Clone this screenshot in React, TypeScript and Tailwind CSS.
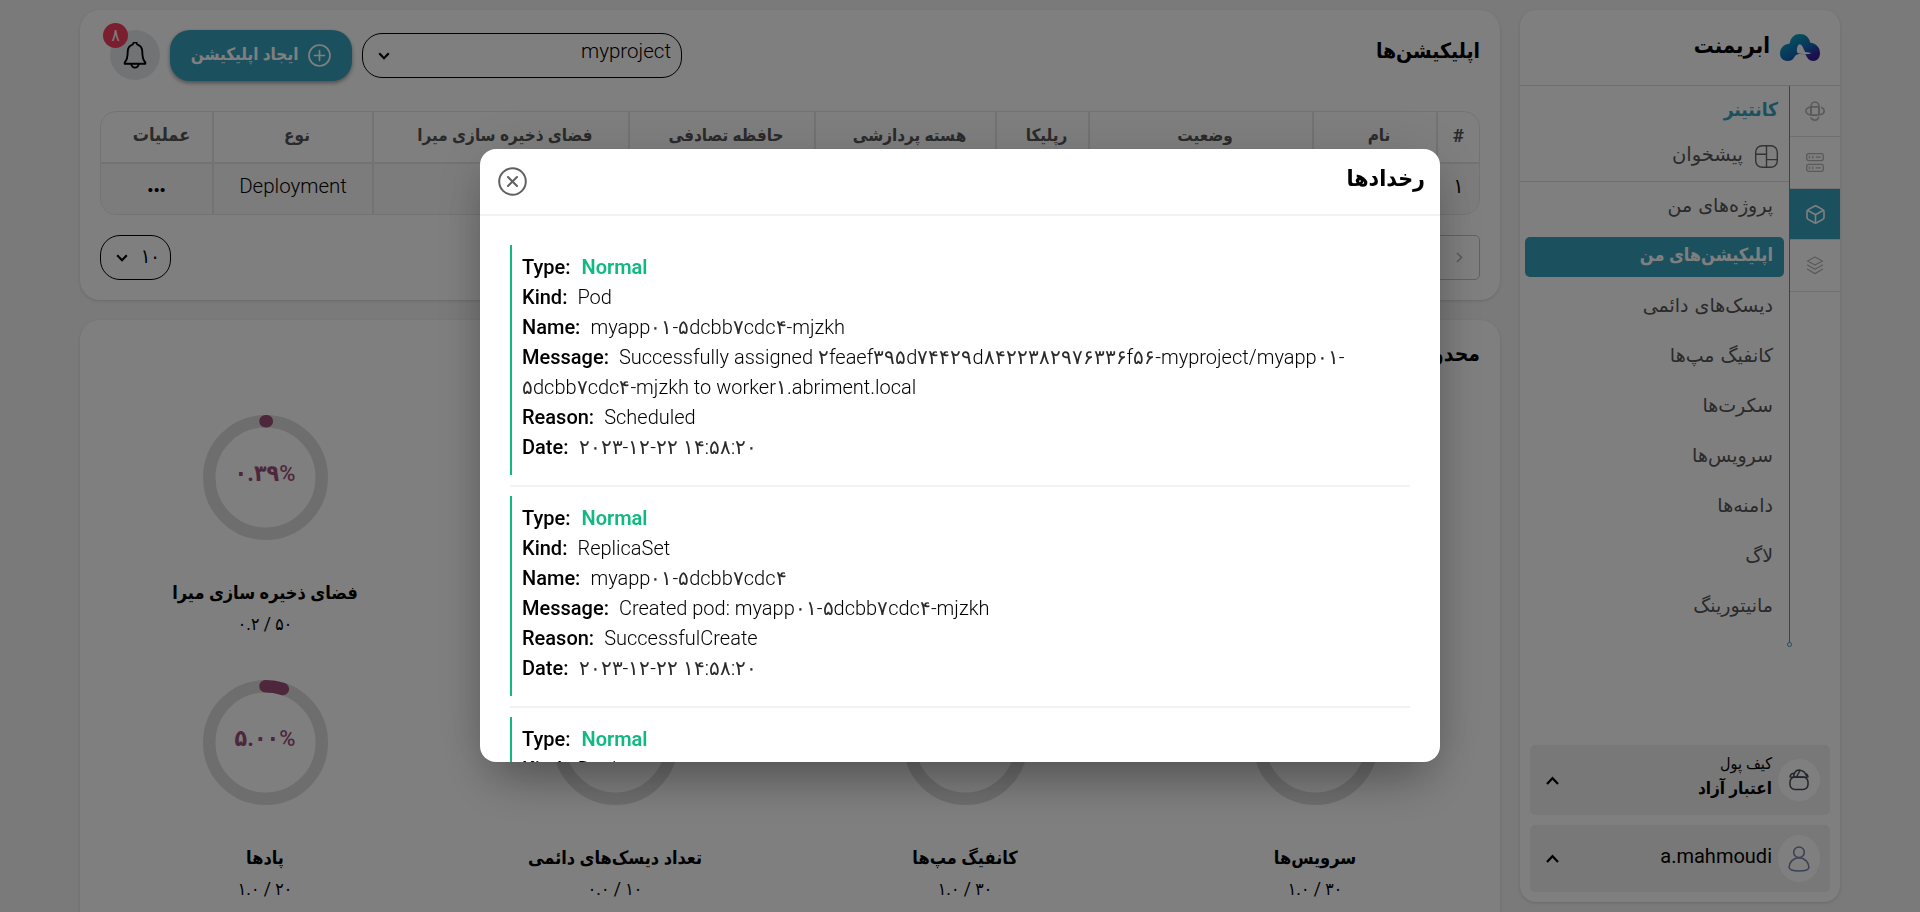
import React from "react";

const NAV = ["پروژه‌های من", "اپلیکیشن‌های من", "دیسک‌های دائمی", "کانفیگ مپ‌ها", "سکرت‌ها", "سرویس‌ها", "دامنه‌ها", "لاگ", "مانیتورینگ"];

const COLUMNS = [
  { title: "#", cell: "۱" },
  { title: "نام", cell: "" },
  { title: "وضعیت", cell: "" },
  { title: "رپلیکا", cell: "" },
  { title: "هسته پردازشی", cell: "" },
  { title: "حافظه تصادفی", cell: "" },
  { title: "فضای ذخیره سازی میرا", cell: "" },
  { title: "نوع", cell: "Deployment" },
  { title: "عملیات", cell: "•••" },
];

const EVENTS = [
  {
    kind: "Pod",
    name: "myapp۰۱-۵dcbb۷cdc۴-mjzkh",
    message: "Successfully assigned ۲feaef۳۹۵d۷۴۴۲۹d۸۴۲۲۳۸۲۹۷۶۳۳۶f۵۶-myproject/myapp۰۱-۵dcbb۷cdc۴-mjzkh to worker۱.abriment.local",
    reason: "Scheduled",
    date: "۲۰۲۳-۱۲-۲۲ ۱۴:۵۸:۲۰",
  },
  {
    kind: "ReplicaSet",
    name: "myapp۰۱-۵dcbb۷cdc۴",
    message: "Created pod: myapp۰۱-۵dcbb۷cdc۴-mjzkh",
    reason: "SuccessfulCreate",
    date: "۲۰۲۳-۱۲-۲۲ ۱۴:۵۸:۲۰",
  },
  { kind: "Deployment", name: "", message: "", reason: "", date: "" },
];

function Mixed({ text }: { text: string }) {
  return (
    <>
      {text.split(/([۰-۹]+)/).map((part, i) =>
        i % 2 ? (
          <span key={i} className="text-[20px] leading-[16px] text-[#2a2a2a] [font-family:'DejaVu_Sans',sans-serif]">{part}</span>
        ) : (
          <React.Fragment key={i}>{part}{part.endsWith("-") && <wbr />}</React.Fragment>
        )
      )}
    </>
  );
}

function Chevron({ up = false }: { up?: boolean }) {
  return up ? (
    <svg width="13" height="9" viewBox="0 0 13 9" fill="none" stroke="#000" strokeWidth="2.2">
      <path d="M1 8 6.500 2.200 12 8" />
    </svg>
  ) : (
    <svg width="12" height="8" viewBox="0 0 12 8" fill="none" stroke="#000" strokeWidth="2.2">
      <path d="M1.200 1.200 6 6.200 10.800 1.200" />
    </svg>
  );
}

function Logo() {
  return (
    <svg width="40" height="28" viewBox="0 0 40 28">
      <defs>
        <linearGradient id="lg" x1="0.2" y1="0" x2="1" y2="1">
          <stop offset="0.1" stopColor="#07a3c0" />
          <stop offset="0.55" stopColor="#1266b5" />
          <stop offset="0.8" stopColor="#3a1f9c" />
          <stop offset="1" stopColor="#3c1599" />
        </linearGradient>
      </defs>
      <path
        fill="url(#lg)"
        d="M20 0c5.200 0 9 3.200 10.300 8.800C36 9.300 40 13.500 40 19c0 5-3 8-6.800 8-3.600 0-6-2.400-7.700-6.700l-6-.3c-2.200.2-4 .8-5.300 3.200C12.800 26 10.500 27 7.200 27 3 27 0 24 0 19.600 0 14 3.800 10 9.700 9.400 10.800 3.300 14.600 0 20 0Z"
      />
      <path fill="#fff" d="M19.700 10.300c2 0 3 2.300 3.700 4.300l1.700 3.300 5.400.8v1l-6 .5-5.500-.6c-1.500-.3-2.400-1.700-2.200-3.500.3-3.200 1.200-5.800 2.900-5.800Z" />
    </svg>
  );
}

function OrbitIcon() {
  return (
    <svg width="20" height="20" viewBox="0 0 20 20" fill="none" stroke="#b4b4b4" strokeWidth="1.600" strokeLinecap="round">
      <path d="M6 13.500V5.500C6 3 7.800 1 10 1s4 2 4 4.500v8M6 17c.8 1.300 2.200 2.200 4 2.200s3-1 3.700-3" />
      <path d="M15.500 13.700c2.200-.6 3.700-2 3.700-3.700 0-1.600-1-2.700-2.500-3.500M12.500 5.800H7C3.500 6.200.8 7.900.8 10s2.700 4 6 4.200h5" />
      <rect x="6" y="5.800" width="8" height="8.400" rx="1.500" />
    </svg>
  );
}

function ServerIcon() {
  return (
    <svg width="18" height="19" viewBox="0 0 18 19" fill="none" stroke="#b4b4b4" strokeWidth="1.300">
      <rect x="0.700" y="0.600" width="16.600" height="7" rx="2" />
      <rect x="0.700" y="11.400" width="16.600" height="7" rx="2" />
      <path d="M3.500 2.800v2.600M6.800 2.800v2.600M9.800 4.100h5M3.500 13.600v2.600M6.800 13.600v2.600M9.800 14.900h5" />
    </svg>
  );
}

function BoxIcon() {
  return (
    <svg width="19" height="19" viewBox="0 0 19 19" fill="none" stroke="#fff" strokeWidth="1.600" strokeLinejoin="round">
      <path d="M8.300 1.200 2.200 4.600C1.400 5 1 5.700 1 6.500v6c0 .8.400 1.500 1.200 1.900l6.100 3.400c.8.400 1.600.4 2.400 0l6.100-3.400c.8-.4 1.200-1.100 1.200-1.900v-6c0-.8-.4-1.500-1.200-1.900l-6.100-3.400c-.8-.4-1.600-.4-2.400 0Z" />
      <path d="m1.500 5.300 8 4.500 8-4.500M9.500 9.800v8.300" />
    </svg>
  );
}

function LayersIcon() {
  return (
    <svg width="18" height="19" viewBox="0 0 18 19" fill="none" stroke="#b4b4b4" strokeWidth="1.300" strokeLinejoin="round" strokeLinecap="round">
      <path d="M9 1 16.500 5 9 9 1.500 5 9 1ZM1.500 9 9 13.200 16.500 9M1.500 13.200 9 17.600l7.500-4.400" />
    </svg>
  );
}

function Ring({ percent, label, value }: { percent: number; label: string; value: string }) {
  const c = 2 * Math.PI * 56.25;
  return (
    <div className="flex h-[265px] flex-col items-center">
      <div className="grid size-[125px] shrink-0 place-items-center">
        <svg className="col-start-1 row-start-1" width="125" height="125" viewBox="0 0 125 125" fill="none" strokeWidth="12.500">
          <circle cx="62.500" cy="62.500" r="56.250" stroke="#dcdcdc" />
          {percent > 0 && (
            <circle cx="62.500" cy="62.500" r="56.250" stroke="#9c4f78" strokeLinecap="round" strokeDasharray={`${(c * percent) / 100} ${c}`} transform="rotate(-90 62.5 62.5)" />
          )}
        </svg>
        {percent > 0 && (
          <span dir="ltr" className="col-start-1 row-start-1 -mt-2 text-[23px] leading-7 font-bold text-[#9c4f78]">
            {percent.toFixed(2).replace(/\d/g, (d) => "۰۱۲۳۴۵۶۷۸۹"[+d])}<span className="text-[22px] font-medium">%</span>
          </span>
        )}
      </div>
      <div className="mt-[38px] h-[30px] text-[18px] leading-[30px] font-bold">{label}</div>
      <div dir="ltr" className="h-8 text-[17.500px] leading-8">{value}</div>
    </div>
  );
}

function Sidebar() {
  return (
    <aside className="flex h-[892px] w-80 shrink-0 flex-col overflow-hidden rounded-2xl bg-white shadow-[0_1px_3px_rgba(0,0,0,0.14)]">
      <div className="flex h-[76px] shrink-0 items-start gap-2.5 border-b border-[#dedede] pt-6 pr-5">
        <Logo />
        <span className="-mt-1 text-[22px] leading-8 font-bold">ابریمنت</span>
      </div>
      <div className="flex h-[559px] shrink-0">
        <div className="w-[50px] shrink-0">
          <div className="flex h-[51px] items-center justify-center border-b border-[#dedede]"><OrbitIcon /></div>
          <div className="flex h-[52px] items-center justify-center border-b border-[#dedede]"><ServerIcon /></div>
          <div className="flex h-[51px] items-center justify-center border-b border-[#dedede] bg-[#36a0bc]"><BoxIcon /></div>
          <div className="flex h-[52px] items-center justify-center border-b border-[#dedede]"><LayersIcon /></div>
        </div>
        <div className="flex w-px shrink-0 flex-col items-center">
          <div className="h-[556px] w-px shrink-0 bg-[#36a0bc]" />
          <div className="size-[5px] shrink-0 rounded-full border border-[#36a0bc]" />
        </div>
        <div className="grow text-[#555]">
          <div className="h-[46px] pr-[11px] pt-1 text-[19px] leading-10 font-bold text-[#36a0bc]">کانتینر</div>
          <div className="flex h-[50px] items-center gap-3 border-b border-[#dedede] pr-[11px] pb-2">
            <svg className="mt-2" width="23" height="23" viewBox="0 0 23 23" fill="none" stroke="#666" strokeWidth="1.400">
              <rect x="0.700" y="0.700" width="21.600" height="21.600" rx="6.500" />
              <path d="M11.500.7v21.600M.7 9.200h10.800M11.500 14.600h10.800" />
            </svg>
            <span className="mt-1 text-[19.500px] leading-8 [font-family:'DejaVu_Sans',sans-serif]">پیشخوان</span>
          </div>
          {NAV.map((item, i) => (
            <div key={item} className="h-[50px] px-[5px] py-[5px]">
              <div className={i === 1 ? "h-10 rounded-[5px] bg-[#36a0bc] pr-[11px] text-[18px] leading-[36px] font-bold text-white" : "h-10 pr-[11px] text-[19px] leading-[36px] [font-family:'DejaVu_Sans',sans-serif]"}>{item}</div>
            </div>
          ))}
        </div>
      </div>
      <div className="mt-auto flex flex-col gap-2.5 px-2.5 pb-2.5">
        <div className="flex h-[70px] items-center rounded-[5px] bg-[#f1f1f1] pr-2.5 pl-4">
          <div className="flex size-[42px] items-center justify-center rounded-full bg-white">
            <svg width="20" height="22" viewBox="0 0 20 22" fill="none" stroke="#444b59" strokeWidth="1.500">
              <path d="M1 8.500C1 6 2.500 4.500 5 4.200M19 8.500c0-2-.8-3.300-2.300-3.900M4.500 8C5 4 7 1.200 10 1c4 .4 6.500 2.500 7.800 6.500M7.500 8l3.500-6.500" />
              <rect x="1" y="8" width="18" height="12.500" rx="5" />
              <path d="M1.500 8.300h17" />
            </svg>
          </div>
          <div className="grow pr-1.5 pb-2">
            <div className="text-[16px] leading-[25px]">کیف پول</div>
            <div className="text-[17px] leading-[25px] font-bold">اعتبار آزاد</div>
          </div>
          <Chevron up />
        </div>
        <div className="flex h-[67px] items-center rounded-[5px] bg-[#f1f1f1] pr-2.5 pl-4">
          <div className="flex h-[47px] w-[42px] items-center justify-center rounded-[50%] bg-white">
            <svg width="22" height="26" viewBox="0 0 22 26" fill="none" stroke="#7684a8" strokeWidth="1.600">
              <circle cx="11" cy="6.300" r="5.300" />
              <path d="M11 11.800c5.500 0 9.900 4.400 9.900 9.400 0 2.500-3.500 3.800-9.900 3.800S1.100 23.700 1.100 21.200c0-5 4.400-9.400 9.900-9.400Z" />
            </svg>
          </div>
          <div className="grow pr-1.5 pb-1.5 text-[20px]">a.mahmoudi</div>
          <Chevron up />
        </div>
      </div>
    </aside>
  );
}

function Applications() {
  return (
    <section className="h-[290px] rounded-[20px] bg-white px-5 pt-5 shadow-[0_1px_3px_rgba(0,0,0,0.14)]">
      <div className="flex h-[51px] items-start gap-2.5 pl-2.5">
        <h1 className="grow text-[21px] leading-[42px] font-bold">اپلیکیشن‌ها</h1>
        <div className="mt-[3px] flex h-[45px] w-80 items-center justify-between rounded-[20px] border border-black pr-2.5 pl-[15px]">
          <span className="pb-2 text-[20.500px] font-light">myproject</span>
          <Chevron />
        </div>
        <div className="flex h-[51px] w-[182px] items-center justify-center gap-2.5 rounded-[20px] bg-[#36a0bc] text-white shadow-[0_2px_4px_rgba(0,0,0,0.4)]">
          <svg width="23" height="23" viewBox="0 0 23 23" fill="none" stroke="#fff" strokeWidth="1.700" strokeLinecap="round">
            <circle cx="11.500" cy="11.500" r="10.500" />
            <path d="M11.500 6.500v10M6.500 11.500h10" />
          </svg>
          <span className="pb-1 text-[17px] leading-8 font-bold">ایجاد اپلیکیشن</span>
        </div>
        <div className="relative flex size-[50px] items-center justify-center rounded-full bg-[#e5e7eb]">
          <svg width="24" height="27" viewBox="0 0 24 27" fill="none" stroke="#000" strokeWidth="1.900" strokeLinejoin="round">
            <path d="M10 2.300a2 2 0 0 1 4 0c3.500 1 5.300 4 5.300 7.500 0 5.500.7 8.300 3 10.700v1.200H1.700v-1.200c2.300-2.400 3-5.200 3-10.700 0-3.500 1.800-6.500 5.300-7.500ZM8.300 22c.3 2.300 1.700 3.600 3.700 3.600s3.400-1.300 3.700-3.600" />
          </svg>
          <span className="absolute -top-[7px] -left-[7px] flex size-[25px] items-center justify-center rounded-full bg-[#f43f5e] text-[17px] leading-none text-white">۸</span>
        </div>
      </div>
      <div className="mt-[30px] overflow-hidden rounded-[16px] border border-[#e5e7eb]">
        <div className="grid grid-cols-[43px_124px_224px_93px_181px_186px_256px_160px_1fr]">
          {COLUMNS.map((c, i) => (
            <div key={c.title} className="border-l-2 border-[#e5e7eb] text-center last:border-l-0">
              <div className={i === 8 ? "h-[52px] border-b-2 border-[#e5e7eb] pl-2.5 text-[18px] leading-[46px] font-bold text-[#555]" : i === 0 ? "h-[52px] border-b-2 border-[#e5e7eb] text-[19px] leading-[47px] font-bold text-[#555]" : "h-[52px] border-b-2 border-[#e5e7eb] pl-2 text-[17px] leading-[46px] font-bold text-[#555]"}>{c.title}</div>
              <div className={c.cell === "•••" ? "h-[50px] bg-[#f8f8f8] text-[17px] leading-[52px] font-bold" : "h-[50px] bg-[#f8f8f8] text-[20.500px] leading-[44px] font-light"}>{c.cell}</div>
            </div>
          ))}
        </div>
      </div>
      <div className="mt-5 flex justify-between">
        <div className="flex h-[45px] w-40 items-center rounded-[5px] border border-[#c4c4c4] pr-4">
          <svg width="7" height="11" viewBox="0 0 7 11" fill="none" stroke="#b5b5b5" strokeWidth="1.600"><path d="m1 1 4.500 4.500L1 10" /></svg>
        </div>
        <div className="flex h-[45px] w-[71px] items-center justify-between rounded-[20px] border border-black pr-[10px] pl-[15px]">
          <span className="pb-1 text-[20px] leading-8">۱۰</span>
          <Chevron />
        </div>
      </div>
    </section>
  );
}

function Limits() {
  return (
    <section className="h-[620px] rounded-[20px] bg-white px-2.5 pt-4 shadow-[0_1px_3px_rgba(0,0,0,0.14)]">
      <h2 className="h-[79px] pr-2.5 text-[21px] leading-9 font-bold">محدودیت‌ها</h2>
      <div className="grid grid-cols-4">
        <div className="col-start-4"><Ring percent={0.39} label="فضای ذخیره سازی میرا" value="۰.۲ / ۵۰" /></div>
        <Ring percent={0} label="سرویس‌ها" value="۱.۰ / ۳۰" />
        <Ring percent={0} label="کانفیگ مپ‌ها" value="۱.۰ / ۳۰" />
        <Ring percent={0} label="تعداد دیسک‌های دائمی" value="۰.۰ / ۱۰" />
        <Ring percent={5} label="پادها" value="۱.۰ / ۲۰" />
      </div>
    </section>
  );
}

function Field({ label, children }: { label: string; children: React.ReactNode }) {
  return (
    <p>
      <b className="mr-2.5 font-medium">{label}:</b>
      {children}
    </p>
  );
}

function EventsDialog() {
  return (
    <div className="fixed inset-0 flex items-center justify-center bg-black/50 pb-px">
      <div className="h-[613px] w-[960px] overflow-hidden rounded-2xl bg-white shadow-[0_25px_50px_-12px_rgba(0,0,0,0.35),0_0_60px_rgba(0,0,0,0.1)]">
        <div className="flex h-[67px] items-center justify-between border-b-2 border-[#f3f3f3] pr-[15px] pl-[18px]">
          <h3 className="pb-1.5 text-[23px] leading-10 font-bold">رخدادها</h3>
          <svg width="29" height="29" viewBox="0 0 29 29" fill="none" stroke="#606060" strokeWidth="2" strokeLinecap="round">
            <circle cx="14.500" cy="14.500" r="13.300" />
            <path d="m10 10 9 9M19 10l-9 9" />
          </svg>
        </div>
        <div dir="ltr" className="px-[30px] pt-[29px]">
          {EVENTS.map((e) => (
            <div key={e.kind} className="mb-[9px] border-b-2 border-[#f3f3f3] pb-2.5">
              <div className="border-l-2 border-[#10b981] pt-[7px] pb-[13px] pl-2.5 text-[20px] leading-[30px] font-light">
                <Field label="Type"><span className="ml-px font-semibold text-[#10b981]">Normal</span></Field>
                <Field label="Kind">{e.kind}</Field>
                {e.name && (
                  <>
                    <Field label="Name"><Mixed text={e.name} /></Field>
                    <Field label="Message"><Mixed text={e.message} /></Field>
                    <Field label="Reason">{e.reason}</Field>
                    <Field label="Date"><Mixed text={e.date} /></Field>
                  </>
                )}
              </div>
            </div>
          ))}
        </div>
      </div>
    </div>
  );
}

export default function App() {
  return (
    <div dir="rtl" className="h-screen overflow-hidden bg-[#f4f4f4] text-black [font-family:Roboto,'DejaVu_Sans_Condensed','DejaVu_Sans',sans-serif]">
      <div className="flex gap-5 px-20 pt-2.5">
        <Sidebar />
        <main className="flex grow flex-col gap-5">
          <Applications />
          <Limits />
        </main>
      </div>
      <EventsDialog />
    </div>
  );
}
